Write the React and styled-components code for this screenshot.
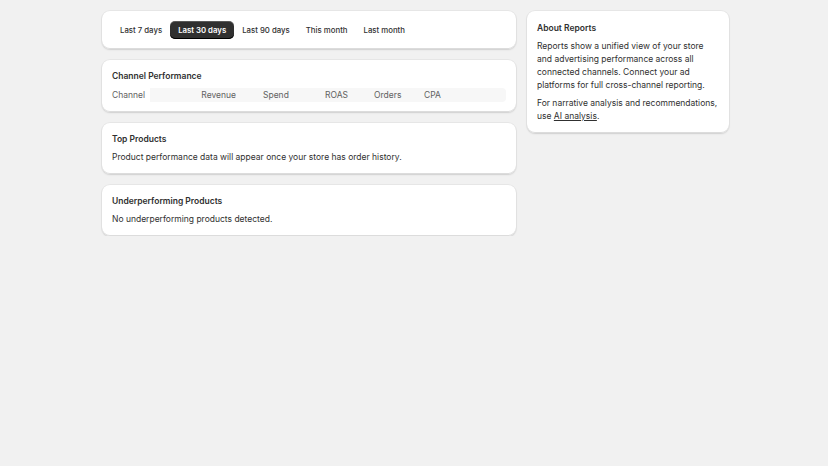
import React from 'react';
import styled, { createGlobalStyle } from 'styled-components';

const GlobalStyle = createGlobalStyle`
  body {
    margin: 0;
    background: #f1f1f1;
    font-family: Inter, "Noto Sans", sans-serif;
    color: #303030;
    -webkit-font-smoothing: antialiased;
  }
`;

const Page = styled.div`
  width: 627px;
  margin: 0 auto;
  padding: 11px 0 0 3px;
  display: grid;
  grid-template-columns: 414px 202px;
  gap: 11px;
  align-items: start;
`;

const Column = styled.div`
  display: flex;
  flex-direction: column;
  gap: 11px;
`;

const Card = styled.div`
  background: #ffffff;
  border-radius: 8px;
  box-shadow: 0 1px 2px 0 rgba(0, 0, 0, 0.1), 0 0 0 1px rgba(0, 0, 0, 0.04),
    inset 0 -1px 0 0 #dcdcdc;
  padding: ${(p) => p.$pad || '10px'};
`;

const Tabs = styled.div`
  display: flex;
  align-items: center;
`;

const Tab = styled.button`
  font-family: inherit;
  font-size: 7.8px;
  font-weight: ${(p) => (p.$active ? 600 : 500)};
  height: 18px;
  padding: 0 8px;
  border: none;
  border-radius: 5px;
  background: ${(p) => (p.$active ? '#303030' : 'transparent')};
  color: ${(p) => (p.$active ? '#ffffff' : '#303030')};
  box-shadow: ${(p) => (p.$active ? 'inset 0 -1px 0 #000, inset 0 1px 0 rgba(255,255,255,0.2)' : 'none')};
  cursor: pointer;
`;

const Heading = styled.h2`
  margin: 0 0 5px;
  font-size: 8.5px;
  line-height: 13px;
  font-weight: 600;
  color: #303030;
`;

const Text = styled.p`
  margin: 0;
  font-size: 8.5px;
  line-height: 13px;
  color: #303030;
  & + & {
    margin-top: 5px;
  }
`;

const TableHead = styled.div`
  display: grid;
  grid-template-columns: 38px 86px 62px 60px 50px 1fr;
  height: 14px;
  align-items: center;
  font-size: 8.5px;
  color: #616161;
`;

const HeadCell = styled.div`
  background: ${(p) => (p.$first ? '#ffffff' : '#f7f7f7')};
  height: 100%;
  display: flex;
  align-items: center;
  justify-content: ${(p) => (p.$right ? 'flex-end' : 'flex-start')};
  padding-left: ${(p) => p.$pl || 0}px;
  border-radius: ${(p) => (p.$last ? '0 4px 4px 0' : 0)};
`;

const Link = styled.a`
  color: #303030;
  text-decoration: underline;
  cursor: pointer;
`;

const ranges = ['Last 7 days', 'Last 30 days', 'Last 90 days', 'This month', 'Last month'];

export default function App() {
  return (
    <>
      <GlobalStyle />
      <Page>
        <Column>
          <Card>
            <Tabs>
              {ranges.map((r) => (
                <Tab key={r} $active={r === 'Last 30 days'}>
                  {r}
                </Tab>
              ))}
            </Tabs>
          </Card>
          <Card>
            <Heading>Channel Performance</Heading>
            <TableHead>
              <HeadCell $first>Channel</HeadCell>
              <HeadCell $right>Revenue</HeadCell>
              <HeadCell $pl={27}>Spend</HeadCell>
              <HeadCell $pl={27}>ROAS</HeadCell>
              <HeadCell $pl={16}>Orders</HeadCell>
              <HeadCell $pl={16} $last>CPA</HeadCell>
            </TableHead>
          </Card>
          <Card>
            <Heading>Top Products</Heading>
            <Text>Product performance data will appear once your store has order history.</Text>
          </Card>
          <Card>
            <Heading>Underperforming Products</Heading>
            <Text>No underperforming products detected.</Text>
          </Card>
        </Column>
        <Column>
          <Card $pad="11px 10px 10px">
            <Heading>About Reports</Heading>
            <Text>
              Reports show a unified view of your store and advertising performance across all
              connected channels. Connect your ad platforms for full cross-channel reporting.
            </Text>
            <Text>
              For narrative analysis and recommendations, use <Link>AI analysis</Link>.
            </Text>
          </Card>
        </Column>
      </Page>
    </>
  );
}
